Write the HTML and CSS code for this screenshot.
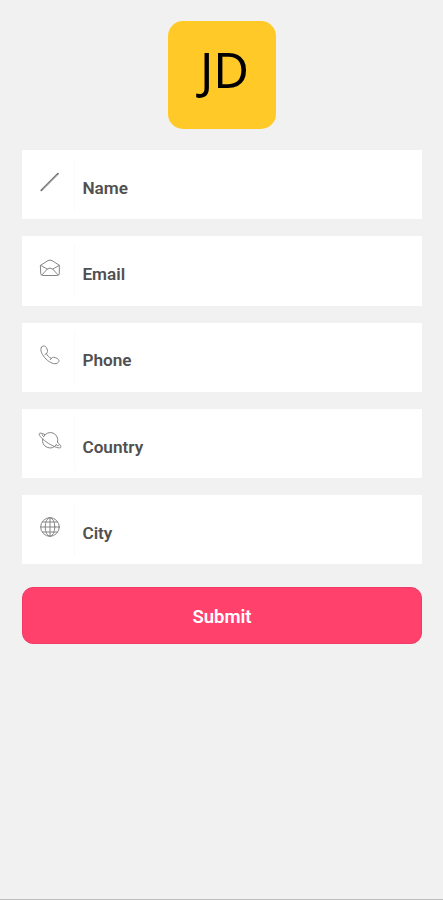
FILE: index.html
```
<!DOCTYPE html>
<html lang="en">
<head>
<meta charset="utf-8">
<title>Profile</title>
<link rel="stylesheet" href="styles.css">
</head>
<body>
<main class="screen">
  <div class="avatar">JD</div>
  <form class="form">
    <div class="field">
      <div class="field-icon"><svg viewBox="0 0 24 24"><path class="pen" d="M3.300 20.300 20 3.700"/><path class="pen-core" d="M5 19 19 5"/></svg></div>
      <label class="field-label">Name</label>
    </div>
    <div class="field">
      <div class="field-icon"><svg viewBox="0 0 24 24"><path d="M2.700 9.200 10 4.600Q12 3.500 14 4.600L21.300 9.200V17.500Q21.300 19.500 19.300 19.500H4.700Q2.700 19.500 2.700 17.500ZM3 9.500 9.300 13.100Q12 10.900 14.700 13.100L21 9.500M4 18.800 9.300 13.100M20 18.800 14.700 13.100"/></svg></div>
      <label class="field-label">Email</label>
    </div>
    <div class="field">
      <div class="field-icon"><svg viewBox="0 0 24 24"><path d="M3.500 4.200C5.200 2.200 7.500 2.500 8.700 5.200C10 8.200 9.800 9.300 8.500 10.300C8.800 12.300 11.400 14.900 13.400 15.300C14.700 13.800 16.300 14 19 15.400C21.600 16.700 21.500 18.800 19.300 20.100C16.200 21.900 11.700 19.600 8 16C4.200 12.200 1.400 7.100 3.500 4.200ZM8.500 10.300 7 11.500M13.400 15.300 12.200 16.700"/></svg></div>
      <label class="field-label">Phone</label>
    </div>
    <div class="field">
      <div class="field-icon"><svg viewBox="0 0 24 24"><path d="M5.600 7.700A7.500 7.500 0 0 1 19.500 13.200M18.200 15.700A7.500 7.500 0 0 1 4.700 10"/><path d="M6.700 5.500C3.700 4 1.700 3.700 1.200 4.700C.5 6.300 4.700 10.700 10.500 14.400C16.500 18.200 21.900 19.800 22.800 18.400C23.400 17.300 21.900 15.300 19.500 13.200M5.600 7.700C4.200 6.400 3.800 5.800 4.200 5.500M18.200 15.700C19.900 17 20.700 17 20.800 16.200"/></svg></div>
      <label class="field-label">Country</label>
    </div>
    <div class="field">
      <div class="field-icon"><svg viewBox="0 0 24 24"><circle cx="12" cy="12" r="9.300"/><ellipse cx="12" cy="12" rx="4.800" ry="9.300"/><path d="M12 2.700V21.300M2.700 12H21.300M4.500 7H19.500M4.500 17H19.500"/></svg></div>
      <label class="field-label">City</label>
    </div>
    <button class="submit" type="button">Submit</button>
  </form>
</main>
</body>
</html>
```
FILE: styles.css
```
* { box-sizing: border-box; }
body {
  margin: 0;
  background: #f1f1f1;
  font-family: Roboto, "Liberation Sans", sans-serif;
}
.screen {
  height: 900px;
  padding: 21px 21px 0 22px;
  border-bottom: 1px solid #bdbdbd;
  display: flex;
  flex-direction: column;
}
.avatar {
  width: 108px;
  height: 107.500px;
  padding-left: 5px;
  align-self: center;
  border-radius: 15px;
  background: #ffca28;
  color: #000;
  font: 49px/97px "Noto Sans", "Open Sans", sans-serif;
  text-align: center;
}
.form {
  display: flex;
  flex-direction: column;
  gap: 17px;
  margin-top: 21.500px;
}
.field {
  height: 69.300px;
  background: #fff;
  display: flex;
  align-items: center;
}
.field-icon {
  width: 53px;
  height: 53px;
  padding: 12px 0 0 16px;
  border-right: 1px solid #fafafa;
}
.field-icon svg {
  display: block;
  width: 24px;
  height: 24px;
  fill: none;
  stroke: #858585;
  stroke-width: 1;
  stroke-linecap: round;
  stroke-linejoin: round;
}
.field-icon .pen { stroke: #777; stroke-width: 1.900; }
.field-icon .pen-core { stroke: #aaa; stroke-width: .6; }
.field-label {
  padding: 6.500px 0 0 7.400px;
  color: #505050;
  font-size: 17.200px;
  font-weight: 600;
  line-height: 20px;
}
.submit {
  height: 57px;
  margin-top: 5.600px;
  padding: 2px 0 0;
  border: 1px solid #f03b68;
  border-radius: 11px;
  background: #ff416c;
  color: #fff;
  font: 600 18.500px/22px Roboto, sans-serif;
}
```
